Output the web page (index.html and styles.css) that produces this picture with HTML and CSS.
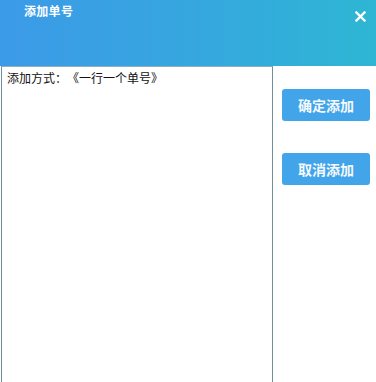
FILE: index.html
```html
<!DOCTYPE html>
<html lang="zh">
<head>
<meta charset="utf-8">
<title>添加单号</title>
<link rel="stylesheet" href="styles.css">
</head>
<body>
<div class="dialog">
  <div class="header">
    <div class="title">添加单号</div>
    <div class="close">
      <svg width="11" height="11" viewBox="0 0 11 11"><path d="M1.5 1.5 L9.5 9.5 M9.5 1.5 L1.5 9.5" stroke="#fff" stroke-width="2.4" stroke-linecap="square"/></svg>
    </div>
  </div>
  <div class="body">
    <div class="editor">添加方式：《一行一个单号》</div>
    <div class="actions">
      <button class="btn">确定添加</button>
      <button class="btn">取消添加</button>
    </div>
  </div>
</div>
</body>
</html>
```
FILE: styles.css
```css
html, body {
  margin: 0;
  padding: 0;
  background: #fff;
  overflow: hidden;
}
.dialog {
  width: 376px;
  height: 382px;
  font-family: "Noto Sans CJK SC", "Liberation Sans", sans-serif;
}
.header {
  height: 66px;
  background: linear-gradient(90deg, #3c9ae8 0%, #35a8de 55%, #2eb6d4 100%);
  display: flex;
  justify-content: space-between;
  align-items: flex-start;
  box-sizing: border-box;
  padding: 3px 10px 0 24px;
}
.title {
  color: #fff;
  font-size: 12px;
  font-weight: bold;
  line-height: 16px;
  letter-spacing: 0.3px;
}
.close {
  margin-top: 8px;
  width: 11px;
  height: 11px;
  display: flex;
}
.body {
  display: flex;
  align-items: flex-start;
}
.editor {
  margin-left: 1px;
  height: 330px;
  border: 1px solid #6f8f9c;
  border-top-color: #8fb0c0;
  box-sizing: content-box;
  font-size: 12px;
  line-height: 18px;
  color: #111;
  padding: 2px 0 0 5px;
  width: 265px;
  text-spacing-trim: space-all;
  font-feature-settings: "halt" 0, "palt" 0;
}
.actions {
  display: flex;
  flex-direction: column;
  gap: 32px;
  padding-top: 23px;
  margin-left: 9px;
}
.btn {
  width: 88px;
  height: 32px;
  border: none;
  border-radius: 3px;
  background: #42a4e9;
  color: #f4f9fd;
  font-family: "Noto Sans CJK SC", "Liberation Sans", sans-serif;
  font-size: 14px;
  font-weight: bold;
  padding: 0;
}
```
